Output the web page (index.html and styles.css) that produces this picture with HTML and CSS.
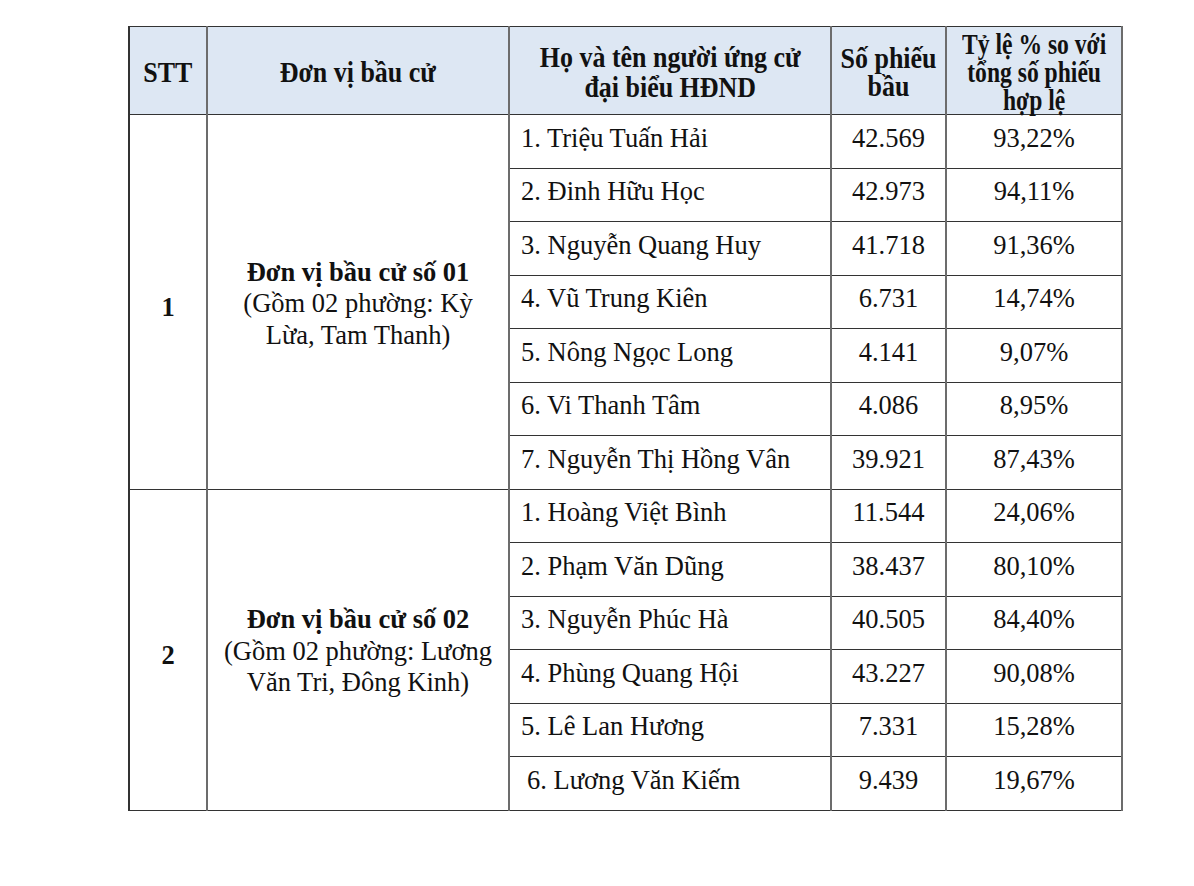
FILE: index.html
```html
<!DOCTYPE html>
<html lang="vi">
<head>
<meta charset="utf-8">
<title>Kết quả bầu cử</title>
<link rel="stylesheet" href="styles.css">
</head>
<body>
<div class="page">
  <table class="results">
    <colgroup>
      <col class="c-stt">
      <col class="c-unit">
      <col class="c-name">
      <col class="c-votes">
      <col class="c-pct">
    </colgroup>
    <thead>
      <tr class="head">
        <th><div class="hd"><span class="sq">STT</span></div></th>
        <th><div class="hd"><span class="sq">Đơn vị bầu cử</span></div></th>
        <th><div class="hd"><span class="sq tall">Họ và tên người ứng cử<br>đại biểu HĐND</span></div></th>
        <th><div class="hd"><span class="sq">Số phiếu<br>bầu</span></div></th>
        <th><div class="hd"><span class="sq narrow">Tỷ lệ % so với<br>tổng số phiếu<br>hợp lệ</span></div></th>
      </tr>
    </thead>
    <tbody>
      <tr>
        <td class="stt" rowspan="7">1</td>
        <td class="unit" rowspan="7"><b>Đơn vị bầu cử số 01</b><br>(Gồm 02 phường: Kỳ<br>Lừa, Tam Thanh)</td>
        <td class="name">1. Triệu Tuấn Hải</td><td class="num">42.569</td><td class="num">93,22%</td>
      </tr>
      <tr><td class="name">2. Đinh Hữu Học</td><td class="num">42.973</td><td class="num">94,11%</td></tr>
      <tr><td class="name">3. Nguyễn Quang Huy</td><td class="num">41.718</td><td class="num">91,36%</td></tr>
      <tr><td class="name">4. Vũ Trung Kiên</td><td class="num">6.731</td><td class="num">14,74%</td></tr>
      <tr><td class="name">5. Nông Ngọc Long</td><td class="num">4.141</td><td class="num">9,07%</td></tr>
      <tr><td class="name">6. Vi Thanh Tâm</td><td class="num">4.086</td><td class="num">8,95%</td></tr>
      <tr><td class="name">7. Nguyễn Thị Hồng Vân</td><td class="num">39.921</td><td class="num">87,43%</td></tr>
      <tr>
        <td class="stt" rowspan="6">2</td>
        <td class="unit" rowspan="6"><b>Đơn vị bầu cử số 02</b><br>(Gồm 02 phường: Lương<br>Văn Tri, Đông Kinh)</td>
        <td class="name">1. Hoàng Việt Bình</td><td class="num">11.544</td><td class="num">24,06%</td>
      </tr>
      <tr><td class="name">2. Phạm Văn Dũng</td><td class="num">38.437</td><td class="num">80,10%</td></tr>
      <tr><td class="name">3. Nguyễn Phúc Hà</td><td class="num">40.505</td><td class="num">84,40%</td></tr>
      <tr><td class="name">4. Phùng Quang Hội</td><td class="num">43.227</td><td class="num">90,08%</td></tr>
      <tr><td class="name">5. Lê Lan Hương</td><td class="num">7.331</td><td class="num">15,28%</td></tr>
      <tr><td class="name indent">6. Lương Văn Kiếm</td><td class="num">9.439</td><td class="num">19,67%</td></tr>
    </tbody>
  </table>
</div>
</body>
</html>
```

FILE: styles.css
```css
html, body {
  margin: 0;
  padding: 0;
  background: #ffffff;
}

.page {
  padding: 26px 0 0 128px;
  font-family: "Liberation Serif", "Times New Roman", serif;
  color: #111111;
}

.results {
  border-collapse: collapse;
  table-layout: fixed;
  width: 993px;
}

.c-stt { width: 78px; }
.c-unit { width: 302px; }
.c-name { width: 322px; }
.c-votes { width: 115px; }
.c-pct { width: 176px; }

.results th,
.results td {
  border-top: 1px solid #333333;
  border-bottom: 1px solid #333333;
  border-left: 2px solid #6c6c6c;
  border-right: 2px solid #6c6c6c;
  padding: 0;
  vertical-align: middle;
}

.results tr > :first-child {
  border-left: 2px solid #333333;
}

.head {
  height: 87px;
}

.results .head th {
  background: #dde7f3;
  font-weight: 700;
  padding-top: 3px;
}

.hd {
  display: flex;
  justify-content: center;
  align-items: center;
}

.sq {
  display: inline-block;
  white-space: nowrap;
  font-size: 29.5px;
  line-height: 28px;
  text-align: center;
  transform: scaleX(0.88);
  transform-origin: center;
}

.sq.tall {
  line-height: 30px;
}

.sq.narrow {
  transform: scaleX(0.8);
}

.results tbody tr {
  height: 53.5px;
}

.results td {
  font-size: 26.5px;
  line-height: 29px;
  padding-bottom: 6px;
}

.results td.stt {
  text-align: center;
  font-weight: 700;
  padding-top: 18px;
}

.results td.unit {
  text-align: center;
  line-height: 31.5px;
  padding-top: 10px;
}

.results td.name {
  padding-left: 11px;
  white-space: nowrap;
}

.results td.name.indent {
  padding-left: 17px;
}

.results td.num {
  text-align: center;
}
```
